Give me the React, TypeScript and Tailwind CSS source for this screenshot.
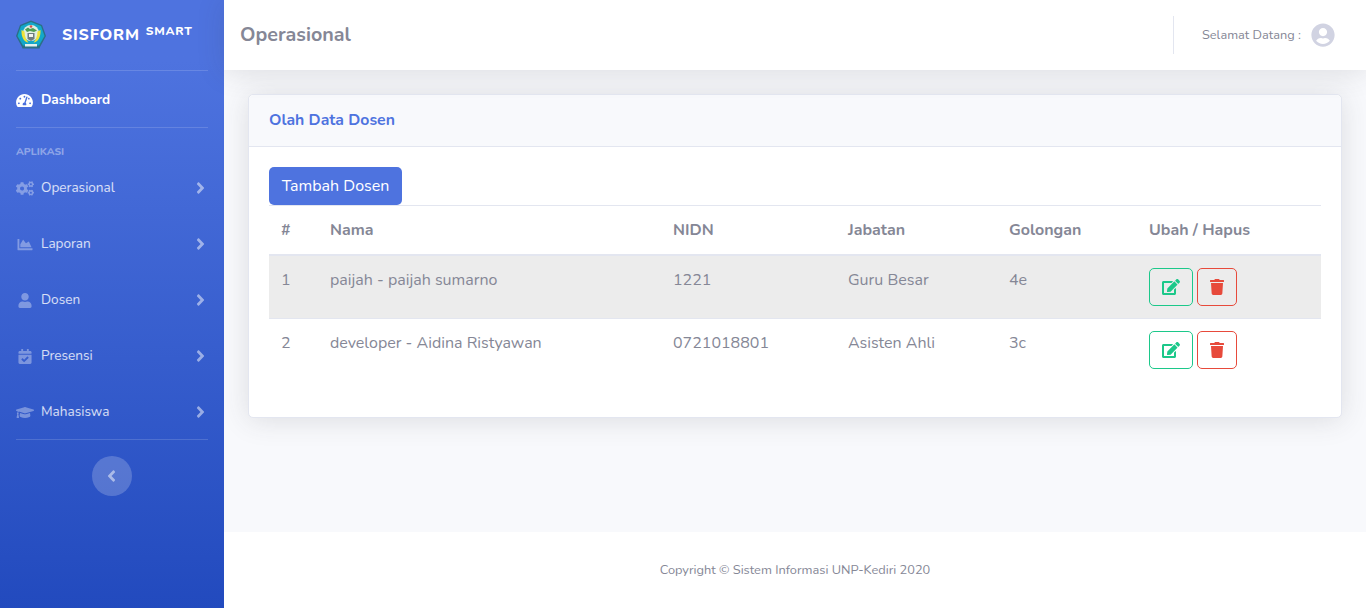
import React from 'react';
import {
  FaTachometerAlt, FaCogs, FaChartArea, FaUser, FaCalendarCheck, FaGraduationCap,
  FaAngleRight, FaAngleLeft, FaEdit, FaTrash, FaUserCircle,
} from 'react-icons/fa';

const menuItems = [
  { name: 'Operasional', icon: FaCogs },
  { name: 'Laporan', icon: FaChartArea },
  { name: 'Dosen', icon: FaUser },
  { name: 'Presensi', icon: FaCalendarCheck },
  { name: 'Mahasiswa', icon: FaGraduationCap },
];

const rows = [
  { no: 1, nama: 'paijah - paijah sumarno', nidn: '1221', jabatan: 'Guru Besar', gol: '4e' },
  { no: 2, nama: 'developer - Aidina Ristyawan', nidn: '0721018801', jabatan: 'Asisten Ahli', gol: '3c' },
];

function Logo() {
  return (
    <svg viewBox="0 0 30 30" className="w-[30px] h-[30px] shrink-0">
      <polygon points="15,0.5 26,5 30,16 24,27 6,27 0,16 4,5" fill="#2b6f86" />
      <polygon points="15,2 25,6 28.5,16 23,25.5 7,25.5 1.5,16 5,6" fill="#12a7c9" />
      <circle cx="15" cy="13" r="8" fill="#dfeee2" />
      <path d="M5.5 10c-.5 7 3 12.5 7 12.5-2-2-4-6-4-11z" fill="#efe23a" />
      <path d="M24.5 10c.5 7-3 12.5-7 12.5 2-2 4-6 4-11z" fill="#efe23a" />
      <path d="M9 9.5l3-2 2 1.500 3-1 4 2.500-3 1.500-4-1-3 1z" fill="#4f9e52" />
      <circle cx="15" cy="6.500" r="1.300" fill="#d8504a" />
      <path d="M11.500 13h7v6l-3.500 2-3.500-2z" fill="#6f7d80" />
      <path d="M13 14h4v3h-4z" fill="#f3f6f1" />
      <rect x="9" y="24" width="12" height="2.500" fill="#e3f1ee" />
      <polygon points="6,27 24,27 23.500,28.500 6.500,28.500" fill="#2b6f86" />
    </svg>
  );
}

function Sidebar() {
  return (
    <aside className="w-[224px] shrink-0 h-full flex flex-col px-4 bg-gradient-to-b from-[#4e73df] from-10% to-[#224abe] text-white">
      <div className="h-[70px] flex items-center shrink-0">
        <Logo />
        <div className="ml-4 flex items-start font-extrabold tracking-[0.8px] text-white">
          <span className="text-[16px] leading-5">SISFORM</span>
          <span className="ml-1.5 text-[12px] leading-4 -mt-0.5">SMART</span>
        </div>
      </div>
      <div className="border-t border-white/15" />
      <div className="h-[56px] pt-[2px] flex items-center text-[13.6px] font-bold shrink-0">
        <FaTachometerAlt className="w-[17px] h-[15px] mr-2" />
        <span>Dashboard</span>
      </div>
      <div className="border-t border-white/15" />
      <div className="mt-[17px] h-[14px] flex items-center text-[10.4px] font-extrabold text-white/40">APLIKASI</div>
      <nav className="mt-[1px] h-[279px]">
        {menuItems.map((item) => (
          <div key={item.name} className="h-[56px] flex items-center text-[13.6px] text-white/80">
            <span className="w-[18px] mr-[7px] flex justify-center text-white/35">
              <item.icon className="w-[18px] h-[15px]" />
            </span>
            <span className="flex-1">{item.name}</span>
            <FaAngleRight className="w-[9px] h-[18px] mr-[3px] text-white/50" />
          </div>
        ))}
      </nav>
      <div className="border-t border-white/15" />
      <button className="mt-4 mx-auto w-10 h-10 pr-px rounded-full bg-white/20 flex items-center justify-center text-white/50">
        <FaAngleLeft className="w-[9px] h-[18px]" />
      </button>
    </aside>
  );
}

function Topbar() {
  return (
    <header className="h-[70px] shrink-0 bg-white flex items-center pl-4 pr-[31px] shadow-[0_2px_28px_0_rgba(58,59,69,0.15)] relative z-10">
      <h1 className="flex-1 text-[19.7px] font-bold text-[#858796]">Operasional</h1>
      <div className="w-px h-[38px] bg-[#e3e6f0] mr-7" />
      <span className="w-[99px] text-[12.75px] leading-[20px] whitespace-nowrap text-[#858796]">Selamat Datang :</span>
      <FaUserCircle className="ml-[10px] w-6 h-6 text-[#d1d3e2]" />
    </header>
  );
}

function DataCard() {
  return (
    <section className="bg-white border border-[#e3e6f0] rounded-[5px] shadow-[0_2px_28px_0_rgba(58,59,69,0.15)] h-[324px]">
      <div className="h-[52px] px-5 flex items-center bg-[#f8f9fc] border-b border-[#e3e6f0] rounded-t-[5px]">
        <h2 className="text-[15.8px] leading-6 -mt-0.5 font-bold text-[#4e73df]">Olah Data Dosen</h2>
      </div>
      <div className="p-5">
        <button className="block h-[38px] w-[133px] bg-[#4e73df] text-white text-[16px] rounded-[5px]">Tambah Dosen</button>
        <table className="w-full table-fixed text-[16px] text-[#858796] text-left">
          <colgroup>
            <col className="w-[49px]" />
            <col className="w-[343px]" />
            <col className="w-[175px]" />
            <col className="w-[161px]" />
            <col className="w-[140px]" />
            <col />
          </colgroup>
          <thead>
            <tr className="h-[49px] border-t border-b-2 border-[#e3e6f0]">
              {['#', 'Nama', 'NIDN', 'Jabatan', 'Golongan', 'Ubah / Hapus'].map((h) => (
                <th key={h} className="px-3 font-bold">{h}</th>
              ))}
            </tr>
          </thead>
          <tbody>
            {rows.map((r, i) => (
              <tr key={r.no} className={`border-b border-[#e3e6f0] last:border-b-0 ${i === 0 ? 'bg-[#ececec]' : ''}`}>
                <td className="px-3 py-3 align-top">{r.no}</td>
                <td className="px-3 py-3 align-top">{r.nama}</td>
                <td className="px-3 py-3 align-top">{r.nidn}</td>
                <td className="px-3 py-3 align-top">{r.jabatan}</td>
                <td className="px-3 py-3 align-top">{r.gol}</td>
                <td className="px-3 py-3 align-top">
                  <div className="flex gap-1">
                    <button className="w-[44px] h-[38px] border border-[#1cc88a] rounded-[5px] flex items-center justify-center text-[#1cc88a]">
                      <FaEdit className="w-[18px] h-4" />
                    </button>
                    <button className="w-[40px] h-[38px] border border-[#e74a3b] rounded-[5px] flex items-center justify-center text-[#e74a3b]">
                      <FaTrash className="w-[14px] h-4" />
                    </button>
                  </div>
                </td>
              </tr>
            ))}
          </tbody>
        </table>
      </div>
    </section>
  );
}

export default function App() {
  return (
    <div className="flex h-screen overflow-hidden bg-[#f8f9fc] font-['Nunito','Noto_Sans',sans-serif]">
      <Sidebar />
      <div className="flex-1 min-w-0 flex flex-col">
        <Topbar />
        <main className="flex-1 pt-6 px-6">
          <DataCard />
        </main>
        <footer className="h-[76px] pt-px shrink-0 bg-white flex items-center justify-center text-[12.8px] text-[#858796]">
          Copyright © Sistem Informasi UNP-Kediri 2020
        </footer>
      </div>
    </div>
  );
}
